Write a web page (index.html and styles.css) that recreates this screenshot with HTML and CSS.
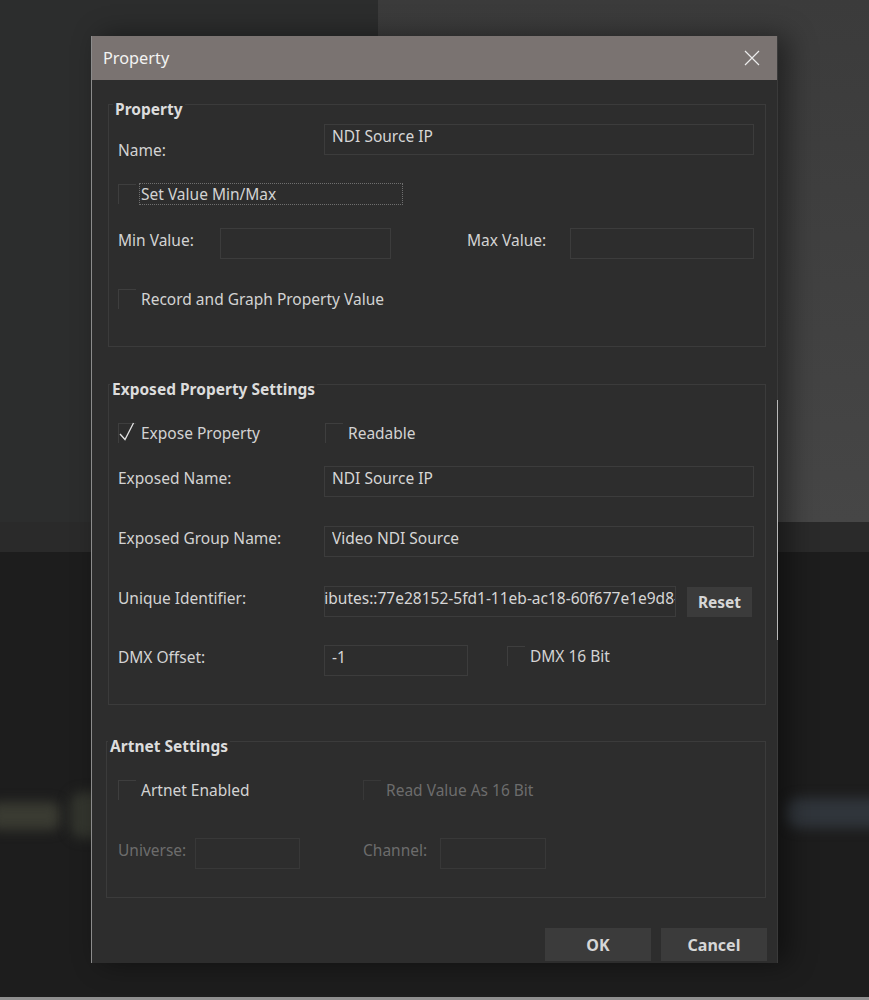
FILE: index.html
```html
<!DOCTYPE html>
<html lang="en">
<head>
    <meta charset="UTF-8">
    <meta name="viewport" content="width=device-width, initial-scale=1.0">
    <title>Property</title>
    <link rel="stylesheet" href="styles.css">
</head>
<body>
    <div class="desktop">
        <div class="app-top">
            <div class="pane-left"></div>
            <div class="pane-right"></div>
        </div>
        <div class="app-band"></div>
        <div class="app-bottom"></div>

        <!-- blurred bits of the app behind the modal -->
        <div class="blob blob-olive"></div>
        <div class="blob blob-olive-small"></div>
        <div class="blob blob-blue"></div>

        <div class="dialog">
            <div class="titlebar">
                <span class="title">Property</span>
                <svg class="close" width="16" height="16" viewBox="0 0 16 16">
                    <path d="M1 1 L15 15 M15 1 L1 15" stroke="#ececec" stroke-width="1.2" fill="none"/>
                </svg>
            </div>

            <div class="dialog-body">
                <div class="group">
                    <div class="group-title first">Property</div>
                    <div class="row row-name">
                        <label class="label label-bottom">Name:</label>
                        <input class="field grow" type="text" value="NDI Source IP">
                    </div>
                    <div class="row row-check gap-29">
                        <span class="check"></span>
                        <span class="check-text focused">Set Value Min/Max</span>
                    </div>
                    <div class="row row-field gap-24">
                        <label class="label w-min">Min Value:</label>
                        <input class="field w-171" type="text">
                        <label class="label w-max">Max Value:</label>
                        <input class="field grow" type="text">
                    </div>
                    <div class="row row-check gap-30">
                        <span class="check"></span>
                        <span class="check-text">Record and Graph Property Value</span>
                    </div>
                    <div class="group-end pad-37"></div>
                </div>

                <div class="group gap-group">
                    <div class="group-title">Exposed Property Settings</div>
                    <div class="row row-check gap-38">
                        <div class="check-item w-207">
                            <span class="check">
                                <svg width="18" height="20" viewBox="0 0 18 20">
                                    <path d="M2 11 L7 16.5 L15.5 0" stroke="#e2e2e2" stroke-width="1.3" fill="none"/>
                                </svg>
                            </span>
                            <span class="check-text">Expose Property</span>
                        </div>
                        <div class="check-item">
                            <span class="check"></span>
                            <span class="check-text">Readable</span>
                        </div>
                    </div>
                    <div class="row row-field gap-23">
                        <label class="label">Exposed Name:</label>
                        <input class="field grow" type="text" value="NDI Source IP">
                    </div>
                    <div class="row row-field gap-29">
                        <label class="label">Exposed Group Name:</label>
                        <input class="field grow" type="text" value="Video NDI Source">
                    </div>
                    <div class="row row-field gap-29">
                        <label class="label">Unique Identifier:</label>
                        <div class="field field-id">
                            <span>Attributes::77e28152-5fd1-11eb-ac18-60f677e1e9d8-</span>
                        </div>
                        <button class="btn btn-reset">Reset</button>
                    </div>
                    <div class="row row-field gap-28">
                        <label class="label">DMX Offset:</label>
                        <input class="field w-144" type="text" value="-1">
                        <div class="check-item dmx">
                            <span class="check"></span>
                            <span class="check-text">DMX 16 Bit</span>
                        </div>
                    </div>
                    <div class="group-end pad-28"></div>
                </div>

                <div class="group gap-group-2 group-artnet">
                    <div class="group-title">Artnet Settings</div>
                    <div class="row row-check gap-38">
                        <div class="check-item w-245">
                            <span class="check"></span>
                            <span class="check-text">Artnet Enabled</span>
                        </div>
                        <div class="check-item disabled">
                            <span class="check"></span>
                            <span class="check-text">Read Value As 16 Bit</span>
                        </div>
                    </div>
                    <div class="row row-field gap-38 disabled">
                        <label class="label w-77">Universe:</label>
                        <input class="field w-105" type="text" disabled>
                        <label class="label w-77 ml-63">Channel:</label>
                        <input class="field w-106" type="text" disabled>
                    </div>
                    <div class="group-end pad-28"></div>
                </div>

                <div class="footer">
                    <button class="btn btn-footer">OK</button>
                    <button class="btn btn-footer">Cancel</button>
                </div>
            </div>
        </div>
    </div>
</body>
</html>
```

FILE: styles.css
```css
* {
    box-sizing: border-box;
}
body {
    margin: 0;
    background-color: #1c1c1c;
    font-family: "Noto Sans", "Open Sans", sans-serif;
    font-size: 15.5px;
    color: #d3d3d3;
}

/* app behind the modal */
.desktop {
    position: relative;
    width: 869px;
    height: 1000px;
    overflow: hidden;
    display: flex;
    flex-direction: column;
}
.app-top {
    height: 522px;
    display: flex;
}
.pane-left {
    width: 378px;
    background-color: #2c2d2d;
}
.pane-right {
    flex: 1;
    background: linear-gradient(#3b3b3b, #464646);
}
.app-band {
    height: 30px;
    background-color: #2a2a2a;
}
.app-bottom {
    flex: 1;
    background-color: #1d1d1d;
    border-bottom: 3px solid #8f8f8f;
}
.blob {
    position: absolute;
    filter: blur(6px);
}
.blob-olive {
    left: -10px;
    top: 802px;
    width: 70px;
    height: 28px;
    border-radius: 8px;
    background-color: #3a3b32;
}
.blob-olive-small {
    left: 70px;
    top: 792px;
    width: 40px;
    height: 46px;
    border-radius: 12px;
    background-color: #33352e;
}
.blob-blue {
    left: 786px;
    top: 798px;
    width: 100px;
    height: 30px;
    border-radius: 12px;
    background-color: #30353b;
}

/* dialog */
.dialog {
    position: absolute;
    left: 91px;
    top: 36px;
    width: 687px;
    height: 927px;
    background-color: #2d2d2d;
    border-left: 1px solid #8c8c8c;
    border-right: 1px solid #3a3a3a;
    box-shadow: 10px 0 26px rgba(0, 0, 0, 0.45);
    display: flex;
    flex-direction: column;
}
.dialog::after {
    content: "";
    position: absolute;
    right: -1px;
    top: 364px;
    width: 1px;
    height: 240px;
    background-color: #b8b8b8;
}
.titlebar {
    height: 44px;
    flex-shrink: 0;
    background-color: #7a7371;
    display: flex;
    align-items: center;
    justify-content: space-between;
    padding: 0 17px 0 11px;
}
.title {
    font-size: 16.3px;
    color: #f3f3f3;
}
.dialog-body {
    padding: 24px 11px 0 16px;
}

/* group boxes */
.group {
    border: 1px solid #3b3b3b;
    padding: 0 11px 0 9px;
}
.gap-group {
    margin-top: 37px;
}
.gap-group-2 {
    margin-top: 36px;
}
.group-artnet {
    margin-left: -2px;
    padding-left: 11px;
}
.group-title {
    display: block;
    width: max-content;
    height: 20px;
    line-height: 20px;
    margin: -6px 0 -14px -8px;
    padding: 0 2px;
    background-color: #2d2d2d;
    font-weight: bold;
    color: #dcdcdc;
}
.group-title.first {
    margin-left: -5px;
}
.group-artnet .group-title {
    margin-left: -10px;
}
.pad-37 {
    height: 37px;
}
.pad-28 {
    height: 28px;
}

/* rows */
.row {
    display: flex;
}
.row-name,
.row-field {
    height: 31px;
}
.row-check {
    height: 20px;
    align-items: center;
}
.row-name {
    margin-top: 19px;
}
.gap-23 { margin-top: 23px; }
.gap-24 { margin-top: 24px; }
.gap-28 { margin-top: 28px; }
.gap-29 { margin-top: 29px; }
.gap-30 { margin-top: 30px; }
.gap-38 { margin-top: 38px; }

.label {
    width: 206px;
    flex-shrink: 0;
    line-height: 20px;
    margin-top: 2px;
    color: #d3d3d3;
}
.label-bottom {
    margin-top: 16px;
}
.w-min { width: 102px; }
.w-max { width: 103px; margin-left: 76px; }
.w-77 { width: 77px; }
.ml-63 { margin-left: 63px; }

.field {
    height: 31px;
    border: 1px solid #3c3c3c;
    background-color: transparent;
    font: inherit;
    color: #d6d6d6;
    line-height: 20px;
    padding: 1px 7px 8px;
    outline: none;
}
.grow { flex: 1; min-width: 0; }
.w-171 { width: 171px; }
.w-144 { width: 144px; }
.w-105 { width: 105px; }
.w-106 { width: 106px; }
.field-id {
    width: 352px;
    display: flex;
    justify-content: flex-end;
    overflow: hidden;
    white-space: nowrap;
    padding: 1px 0 0 0;
}
.field-id span {
    flex-shrink: 0;
    margin-right: -4px;
}

/* checkboxes */
.check-item {
    display: flex;
    align-items: center;
    height: 20px;
}
.w-207 { width: 207px; }
.w-245 { width: 245px; }
.dmx {
    margin-left: 39px;
    align-self: flex-start;
    margin-top: 1px;
}
.check {
    width: 18px;
    height: 20px;
    flex-shrink: 0;
    border-top: 1px solid #3e3e3e;
    border-left: 1px solid #3e3e3e;
    margin-right: 5px;
    position: relative;
}
.check svg {
    position: absolute;
    left: -1px;
    top: -1px;
    overflow: visible;
}
.check-text {
    line-height: 20px;
}
.focused {
    width: 262px;
    margin-left: -1px;
    padding-left: 1px;
    outline: 1px dotted #6f6f6f;
}
.disabled .check-text,
.disabled .label {
    color: #6c6c6c;
}
.disabled .check {
    border-color: #383838;
}
.disabled .field {
    border-color: #383838;
}

/* buttons */
.btn {
    font: inherit;
    font-weight: bold;
    color: #d6d6d6;
    background-color: #3b3b3b;
    border: none;
    cursor: pointer;
}
.btn-reset {
    width: 65px;
    height: 30px;
    margin-left: 11px;
    margin-top: 1px;
}
.footer {
    display: flex;
    justify-content: flex-end;
    gap: 10px;
    margin-top: 30px;
    margin-right: -1px;
}
.btn-footer {
    width: 106px;
    height: 33px;
    font-size: 16px;
}
```
